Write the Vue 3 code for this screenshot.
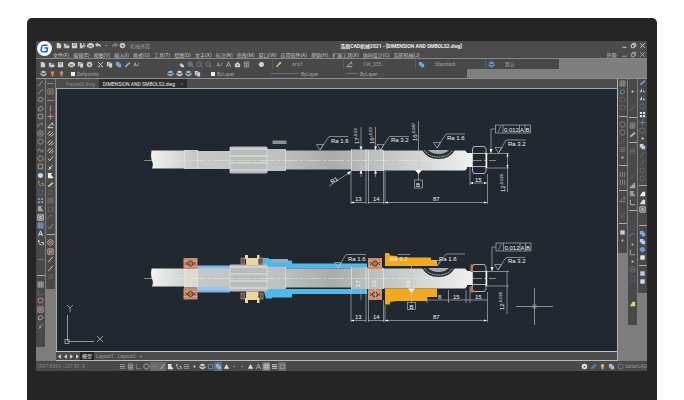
<template>
  <div class="page">
    <div class="monitor">
      <div class="app">
        <header class="header">
          <div class="logo">
            <svg viewBox="0 0 16 16">
              <path d="M12.4 3.4H7.2Q4.4 3.4 3.8 6L3.2 9.6Q2.8 12.6 5.6 12.6H11.4L12.4 7.2H8" fill="none" stroke="#2467ae" stroke-width="2.2" />
            </svg>
          </div>
          <div class="header-rows">
            <div class="title-row">
              <div class="quick">
                <button v-for="(t, i) in quickTools" :key="i" class="tool" :aria-label="t.icon">
                  <Icon :name="t.icon" :color="t.color" />
                </button>
                <span class="workspace">机械界面</span>
              </div>
              <h1>浩辰CAD机械2021 - [DIMENSION AND SMBOLS2.dwg]</h1>
              <div class="window-buttons">
                <button v-for="n in ['min', 'restore', 'close']" :key="n" class="tool" :aria-label="n">
                  <Icon :name="n" color="#ddd" />
                </button>
              </div>
            </div>
            <div class="menu-row">
              <nav class="menu">
                <button v-for="m in menus" :key="m">{{ m }}</button>
              </nav>
              <div class="window-buttons">
                <button class="look">外观-</button>
                <button v-for="n in ['min', 'restore', 'close']" :key="n" class="tool" :aria-label="n">
                  <Icon :name="n" color="#aaa" />
                </button>
              </div>
            </div>
          </div>
        </header>

        <div class="toolbar standard">
          <div class="tool-icons">
            <div v-for="(g, gi) in standardTools" :key="gi" class="tool-group">
              <button v-for="(t, i) in g" :key="i" class="tool" :aria-label="t.icon">
                <Icon :name="t.icon" :color="t.color" />
              </button>
            </div>
          </div>
          <label v-for="s in styleFields" :key="s.value" class="field">
            <Icon :name="s.icon" :color="s.color" />
            <select :aria-label="s.label"><option>{{ s.value }}</option></select>
          </label>
        </div>

        <div class="toolbar props">
          <label class="field layer">
            <Icon name="layers" color="#bbb" />
            <Icon name="bulb" color="#d98a3a" />
            <Icon name="bulb" color="#c9904e" />
            <i class="swatch"></i>
            <select aria-label="Layer"><option>Defpoints</option></select>
          </label>
          <div class="tool-group">
            <button v-for="(t, i) in layerTools" :key="i" class="tool" :aria-label="t.icon">
              <Icon :name="t.icon" :color="t.color" />
            </button>
          </div>
          <label class="field">
            <i class="swatch"></i>
            <select aria-label="Color"><option>ByLayer</option></select>
          </label>
          <label class="field">
            <i class="line long"></i>
            <select aria-label="Linetype"><option>ByLayer</option></select>
          </label>
          <label class="field">
            <i class="line"></i>
            <select aria-label="Lineweight"><option>ByLayer</option></select>
          </label>
        </div>

        <div class="body">
          <div class="side">
            <div v-for="(col, ci) in leftColumns" :key="ci" class="strip" :class="'left-' + ci">
              <div v-for="(t, i) in col" :key="i" class="slot">
                <i v-if="t === 'sep'" class="sep"></i>
                <button v-else-if="t !== 'gap'" class="tool" :aria-label="t[0]">
                  <Icon :name="t[0]" :color="t[1] || '#a2a2a2'" />
                </button>
              </div>
            </div>
          </div>

          <main class="center">
            <div class="doc-tabs">
              <button>Packet3.dwg</button>
              <button class="active">DIMENSION AND SMBOLS2.dwg <span>×</span></button>
            </div>

            <svg class="drawing" viewBox="57 89 560 262">
              <defs>
                <linearGradient id="steel" x1="152" x2="480" y1="0" y2="0" gradientUnits="userSpaceOnUse">
                  <stop offset="0" stop-color="#f1f1f1" />
                  <stop offset="0.13" stop-color="#c6c8c8" />
                  <stop offset="0.38" stop-color="#bfc1c0" />
                  <stop offset="0.55" stop-color="#a9acaa" />
                  <stop offset="0.75" stop-color="#c8caca" />
                  <stop offset="1" stop-color="#f4f4f4" />
                </linearGradient>
                <g id="bearing">
                  <rect width="14" height="11" fill="#c98d6c" />
                  <path d="M0 3H14M0 8H14" stroke="#e5b499" stroke-width="0.6" />
                  <circle cx="7" cy="5.5" r="2.6" fill="#b0745a" stroke="#3b2d2a" stroke-width="0.8" />
                  <path d="M2 4L5 7M12 4L9 7M2 7L4 5M12 7L10 5" stroke="#4b3933" stroke-width="0.8" />
                </g>
                <g id="shaft">
                  <path d="M151.500 150.500H184V150H198V151H230V169H198V169H184V168.500H152Q154 164 151.500 160Q150.500 155 151.500 150.500Z" fill="url(#steel)" />
                  <path d="M267 149H285.500V150.500H351V149.500H383V150.500H465L467 152.500V153H473V167H467V168.500L465 170.500H383V171H351V169.500H285.500V171H267Z" fill="url(#steel)" />
                  <rect x="230" y="146.500" width="37" height="27" rx="1" fill="#b9bcbb" />
                  <path d="M230 149H267M230 156H267M230 163H267M230 170H267" stroke="#d5d7d6" stroke-width="1.6" />
                  <path d="M184.500 150V169M197.500 150V169M285.500 149V171M230 147V173M267 147V173" stroke="#e0e2e2" stroke-width="0.7" />
                  <path d="M351.500 149V171M366 149V171M368.500 150V171M383.500 150V171" stroke="#edf0f0" stroke-width="0.6" />
                  <path d="M422 150H455Q450 159 438.500 159Q427 159 422 150Z" fill="#2c3137" />
                  <path d="M424.500 150.500Q429 157 438.500 157Q448 157 452.500 150.500" fill="none" stroke="#c8caca" stroke-width="1" stroke-dasharray="1.500 0.8" />
                  <path d="M428 150H449Q445 154 438.500 154T428 150Z" fill="#a7acad" />
                  <path d="M473.500 146.500H484.500L486 149V171L484.500 173.500H473.500L472.500 171V149ZM473 153.500H486M473 166.500H486" fill="#20272f" stroke="#d5d8da" stroke-width="0.8" />
                  <path d="M486.500 153V168" stroke="#fff" stroke-width="1.4" />
                  <path d="M144 160.500H496" stroke="#e4e6e8" stroke-width="0.5" stroke-dasharray="16 2 3 2" />
                </g>
                <g id="tri">
                  <path d="M-3.500-5.500H3.500L0 0Z" fill="none" />
                </g>
              </defs>

              <!-- bare shaft -->
              <use href="#shaft" />
              <rect x="272.500" y="140.500" width="14" height="3.500" fill="#8e9294" />

              <g class="ink">
                <path d="M487 153.500H509M487 168H509M507.500 153V192M491 153V129H495.500" />
                <path d="M351 171V204M366 171V204M368.500 171V204M383.500 171V204M385 171V204M487.500 174V204M470 167V185" />
                <path d="M351 202.500H366M368 202.500H384M385 202.500H487M470 183H487" />
                <path d="M361 127V177M375.500 127V177M418.500 121V180M329 186L351 171.500" />
                <rect x="414.500" y="180" width="8" height="8" />
                <path d="M320 150L329 136.500H348M380.500 150L389.500 136.500H409M437 148L446 134H465M498.500 153L506 140H526" />
                <use href="#tri" x="320" y="150" />
                <use href="#tri" x="380.500" y="150" />
                <use href="#tri" x="437" y="148" />
                <use href="#tri" x="498.500" y="153" />
                <rect x="495.500" y="125" width="35" height="8" />
                <path d="M503 125V133M519.500 125V133M525 125V133M498 132L501 126" />
              </g>
              <path class="solid" d="M415 170H422L418.500 174ZM489.500 149H492.500L491 153ZM347 172.500L351 171L349 175ZM359.500 146.500h3L361 150ZM359.500 173.500h3L361 170ZM374 146.500h3L375.500 150ZM374 173.500h3L375.500 170ZM351 202.500l3-1v2ZM487 202.500l-3-1v2ZM385 202.500l3-1v2ZM470 183l3-1v2ZM487 183l-3-1v2ZM507.500 153.500l-1 3h2ZM507.500 168l-1-3h2Z" />
              <g class="dim">
                <text x="331" y="143">Ra 1.6</text>
                <text x="391" y="142">Ra 3.2</text>
                <text x="447" y="140">Ra 1.6</text>
                <text x="508" y="146">Ra 3.2</text>
                <text x="504" y="131.500">0.012</text>
                <text x="520" y="131.500">A</text>
                <text x="525.500" y="131.500">B</text>
                <text x="416" y="186.500">B</text>
                <text x="355" y="201">13</text>
                <text x="373" y="201">14</text>
                <text x="433" y="201">87</text>
                <text x="475" y="182">15</text>
                <text transform="translate(332 184) rotate(-32)">R1</text>
                <text transform="translate(359 144) rotate(-90)">17<tspan class="tol" dy="-2">-0.03</tspan></text>
                <text transform="translate(373.500 144) rotate(-90)">16<tspan class="tol" dy="-2">+0.03</tspan></text>
                <text transform="translate(416.500 141) rotate(-90)">16<tspan class="tol" dy="-2">-0.087</tspan></text>
                <text transform="translate(505 192) rotate(-90)">12<tspan class="tol" dy="-2">-0.020</tspan></text>
              </g>

              <!-- assembled shaft -->
              <rect x="197" y="266" width="33" height="26" fill="#9cc5ee" />
              <path d="M263 258H269V259H288V260.500H292V263.500H367V268.500H263ZM263 289H367V294H292V297.500H272V298.500H266Z" fill="#50b9ec" />
              <use href="#shaft" y="118" />
              <path d="M198 266.500H230M198 291.500H230" stroke="#7cb4ea" stroke-width="2" />
              <rect x="273" y="259" width="14" height="3.500" fill="#9ba9b5" />
              <rect x="184" y="269" width="14" height="20" fill="#f0e6df" opacity="0.55" />
              <use href="#bearing" x="183.500" y="258" />
              <use href="#bearing" x="183.500" y="288.500" />
              <use href="#bearing" x="368" y="258" />
              <use href="#bearing" x="368" y="289" />
              <g fill="#ead7a0">
                <path d="M245 255H248V258H257V255H259.500V259H258.500V265H246V259H245Z" />
                <path d="M246 291.500H258.500V298H259.500V303H257V300H248V303H245V298H246Z" />
              </g>
              <g fill="#6b4e4d" stroke="#c8a294" stroke-width="0.6">
                <rect x="241" y="258" width="3.500" height="6" />
                <rect x="260" y="258" width="3" height="6" />
                <rect x="241" y="293" width="3.500" height="6" />
                <rect x="260" y="293" width="3" height="6" />
              </g>
              <path d="M385 253H389L390 255.500L397 256L398 257.500H431V260H437V266H385Z" fill="#f2a922" />
              <path d="M385 288.500H437V297H427V301H397L390 302V304.500H385Z" fill="#f2a922" />
              <path d="M470.500 264.500H473V272H470.500ZM470.500 286H473V292.500H470.500Z" fill="#b9785a" />

              <g class="ink">
                <path d="M487 271.500H509M487 286H509M507 271V314M492 271V247H496" />
                <path d="M351 289V322M366 289V322M368.500 300V322M383.500 300V322M385 305V322M487.500 292V322M427 297V303M448.500 290V303M466 290V303M470 287V303" />
                <path d="M351 320.500H366M368 320.500H384M385 320.500H487M427 300H487" />
                <path d="M361 272V300M375.500 272V300M411.500 266V303" />
                <rect x="407.500" y="302.500" width="8" height="7" />
                <path d="M338 268L346 254.500H366M398 254.500H410M437 266L446 254H465M498 270L506 257.500H525" />
                <use href="#tri" x="338" y="268" />
                <use href="#tri" x="437" y="266" />
                <use href="#tri" x="498" y="270" />
                <rect x="496" y="243" width="35" height="8" />
                <path d="M503.500 243V251M520 243V251M525.500 243V251M498.500 250L501.500 244" />
              </g>
              <path class="solid" d="M408 288.500H415L411.500 292.500ZM490.500 267H493.500L492 271ZM351 320.500l3-1v2ZM487 320.500l-3-1v2ZM385 320.500l3-1v2Z" />
              <g class="dim">
                <text x="348" y="260.500">Ra 1.6</text>
                <text x="390" y="260.500">Ra 3.2</text>
                <text x="439" y="260.500">Ra 1.6</text>
                <text x="508" y="263">Ra 3.2</text>
                <text x="504.500" y="249.500">0.012</text>
                <text x="520.500" y="249.500">A</text>
                <text x="526" y="249.500">B</text>
                <text x="409.500" y="308.500">B</text>
                <text x="355" y="319">13</text>
                <text x="373" y="319">14</text>
                <text x="433" y="319">87</text>
                <text x="438" y="299">8</text>
                <text x="453" y="299">15</text>
                <text x="475" y="299">15</text>
                <text transform="translate(360 287) rotate(-90)">17</text>
                <text transform="translate(376 287) rotate(-90)">16</text>
                <text transform="translate(410 287) rotate(-90)">16</text>
                <text transform="translate(504 310) rotate(-90)">12<tspan class="tol" dy="-2">-0.020</tspan></text>
              </g>

              <!-- cursor and axes -->
              <path d="M516 306.500H553M534.500 288V325" stroke="#a4a8ab" stroke-width="0.8" />
              <rect x="533" y="305" width="3" height="3" fill="none" stroke="#a4a8ab" stroke-width="0.6" />
              <g fill="none" stroke="#9da2a6" stroke-width="0.9">
                <rect x="65" y="339.500" width="4" height="4" />
                <path d="M67.500 315V341.500H94" />
                <path d="M67 305L70 308L73 305M70 308V312M97 336L103 342M103 336L97 342" />
              </g>
            </svg>

            <div class="layout-tabs">
              <button v-for="(n, i) in ['prev', 'prev', 'next', 'next']" :key="i" class="nav" :aria-label="n">
                <Icon :name="n" color="#e0e0e0" />
              </button>
              <button class="active">模型</button>
              <button>Layout1</button>
              <button>Layout2</button>
              <button>+</button>
            </div>
          </main>

          <div class="side">
            <div v-for="(col, ci) in rightColumns" :key="ci" class="strip" :class="'right-' + ci">
              <div v-for="(t, i) in col" :key="i" class="slot">
                <i v-if="t === 'sep'" class="sep"></i>
                <button v-else-if="t !== 'gap'" class="tool" :aria-label="t[0]">
                  <Icon :name="t[0]" :color="t[1] || '#8c8c8c'" />
                </button>
              </div>
            </div>
          </div>
        </div>

        <footer class="status">
          <span class="coords">1997.8361, -227.81, 0</span>
          <div class="status-icons">
            <button v-for="(t, i) in statusTools" :key="i" class="tool" :class="{ on: t[2] }" :aria-label="t[0]">
              <Icon :name="t[0]" :color="t[1]" />
            </button>
          </div>
          <div class="status-right">
            <button v-for="(t, i) in trayTools" :key="i" class="tool" :aria-label="t[0]">
              <Icon :name="t[0]" :color="t[1]" />
            </button>
            <span>GstarCAD</span>
          </div>
        </footer>
      </div>
    </div>
  </div>
</template>

<script setup>
import { h } from 'vue'

// [path, filled]
const glyphs = {
  file: ['M2 1H5L7 3V7H2Z', true],
  open: ['M1 2H3L4 3H7V4H3L2 6H1ZM3 4.500H8L6.500 7H1.500Z', true],
  save: ['M1 1H3V4H5V1H7V7H1ZM3.500 1H4.500V3H3.500Z', true],
  saveas: ['M1 1H3V4H5V1H6V4L4 6V7H1ZM7 3L8 4L5 7V6Z', true],
  print: ['M2 1H6V2H7L8 3V6H6V7H2V6H0V3L2 2ZM2 4V5H6V4Z', true],
  undo: ['M0 3L3 0.500V2Q7 2 7 6Q5 4 3 4V6Z', true],
  redo: ['M8 3L5 0.500V2Q1 2 1 6Q3 4 5 4V6Z', true],
  dash: ['M2.500 4H5', false],
  gear: ['M4 0.500L5 1.300L6.500 1.300L6.700 3L7.600 4L6.700 5L6.500 6.700L5 6.700L4 7.500L3 6.700L1.500 6.700L1.300 5L0.400 4L1.300 3L1.500 1.300L3 1.300ZM3 3V5H5V3Z', true],
  cut: ['M1 1L6 6M7 1L2 6M1 6.500H3M5 6.500H7', false],
  copy: ['M1 1H5V2H3V6H1ZM3.500 2.500H7V7.500H3.500Z', true],
  brush: ['M5 1H7V3L4 5L3 7L1 6L3 4Z', true],
  ab: ['M1 6L2.500 2L4 6M5 6L7 2M1.500 5H3.500', false],
  hand: ['M1 4L3 4V2L7 5V7H4Z', true],
  zoom: ['M1 3.500A2.500 2.500 0 1 0 6 3.500A2.500 2.500 0 1 0 1 3.500M5.300 5.300L7.500 7.500', false],
  zoomin: ['M1 3.500A2.500 2.500 0 1 0 6 3.500A2.500 2.500 0 1 0 1 3.500M5.300 5.300L7.500 7.500M2.500 3.500H4.500M3.500 2.500V4.500', false],
  home: ['M0.500 4L4 1L7.500 4H7V7H1V4ZM3 4V5H5V4Z', true],
  calc: ['M1.500 1H6.500V7H1.500ZM1.500 3H6.500M1.500 5H6.500M4 3V7', false],
  point: ['M3 3H5V5H3Z', true],
  ball: ['M4 1A3 3 0 1 1 3.900 1Z', true],
  pen: ['M1 7L1.500 5L6 1L7.500 2.500L3 6.500Z', true],
  layers: ['M4 0.500L7.500 2.300L4 4L0.500 2.300ZM0.500 3.500L4 5.300L7.500 3.500V5.500L4 7.500L0.500 5.500Z', true],
  bulb: ['M4 1Q6 1 6 3L5 5V7H3V5L2 3Q2 1 4 1', true],
  slash: ['M1.500 7L6.500 1', false],
  slashes: ['M0.500 5L4 1M2 7L7 2M4.500 7.500L7.500 4.500', false],
  poly: ['M1.500 6.500L2 3L5 1.500L7 4L5 6.500Z', false],
  circle: ['M4 1A3 3 0 1 1 3.900 1Z', false],
  target: ['M4 0.800A3.200 3.200 0 1 1 3.900 0.800ZM4 3A1 1 0 1 1 3.900 3Z', false],
  arc: ['M1 6Q1 1.500 6.500 2', false],
  cloud: ['M2 6Q0 5 2 3Q3 0 5.500 2Q8 4 6 6Z', false],
  wave: ['M1 5Q2.500 0 4 4T7 3', false],
  box: ['M1.500 1.500H6.500V6.500H1.500Z', false],
  boxdot: ['M1 1H7V7H1ZM3 3H5V5H3Z', false],
  block: ['M1.500 1.500H6.500V6.500H1.500Z', true],
  blocks: ['M1 1H3.500V3.500H1ZM4.500 1H7V3.500H4.500ZM1 4.500H3.500V7H1ZM4.500 4.500H7V7H4.500Z', true],
  grid: ['M1 1H7V7H1ZM3 1V7M5 1V7M1 3H7M1 5H7', false],
  hatch: ['M1 4L4 1M1 7L7 1M4 7L7 4', false],
  bars: ['M1 2H7M1 4H7M1 6H7', false],
  vbars: ['M1.500 1V7M4 1V7M6.500 1V7', false],
  hline: ['M0.500 4H7.500', false],
  vline: ['M4 0.500V7.500', false],
  plus: ['M4 0.500V7.500M0.500 4H7.500', false],
  angle: ['M7 6.500H1L6 1L7 4', false],
  corner: ['M1 6.500H7M1.500 6V1', false],
  check: ['M1 4L3 6.500L7 1.500', false],
  cross: ['M1.500 7L6.500 1M2 3L5 6', false],
  flag: ['M1 1H6L4.500 3L7 6V7H1Z', true],
  step: ['M1 7V5H3V3H5V1H7V7Z', true],
  wedge: ['M1 7L4 2H7V7Z', true],
  text: ['M1.500 7L4 1L6.500 7M2.500 5H5.500', false],
  swap: ['M2 1V4M1 2.500H3M5 4H7V7M2 5L5 7', false],
  pair: ['M1 1H5V3H7V7H3V5H1Z', true],
  mirror: ['M3.500 1V6H0.500ZM4.500 3L7.500 6H4.500Z', true],
  tri: ['M4 1L7 6.500H1Z', true],
  min: ['M1.500 6H6.500', false],
  restore: ['M1.500 3H5V6.500H1.500ZM3 3V1.500H6.500V5H5', false],
  close: ['M1.500 1.500L6.500 6.500M6.500 1.500L1.500 6.500', false],
  prev: ['M5.500 1.500V6.500L2.500 4Z', true],
  next: ['M2.500 1.500V6.500L5.500 4Z', true]
}

const Icon = (props) => {
  const [d, filled] = glyphs[props.name]
  return h('svg', { class: 'icon', viewBox: '0 0 8 8' }, [
    h('path', {
      d,
      fill: filled ? props.color : 'none',
      stroke: filled ? 'none' : props.color,
      'fill-rule': 'evenodd'
    })
  ])
}
Icon.props = ['name', 'color']

const tools = (names, color = '#d0d0d0') =>
  names.split(' ').map((n) => {
    const [icon, c] = n.split(':')
    return { icon, color: c || color }
  })

const menus = [
  '文件(F)', '编辑(E)', '视图(V)', '插入(I)', '格式(O)', '工具(T)', '绘图(D)', '文字(X)',
  '标注(N)', '修改(M)', '窗口(W)', '应用软件(A)', '帮助(H)', '扩展工具(X)', '协同设计(C)', '浩辰机械(J)'
]

const quickTools = tools('file open save saveas print undo dash:#999 redo:#888 gear')

const standardTools = [
  tools('file open save'),
  tools('print copy gear'),
  tools('cut copy pair:#7da7d8 pen:#8ba6c4 ab:#aaa'),
  tools('hand zoomin:#7894c4 zoom:#7884a0 zoom:#7884a0'),
  tools('ab:#999 text:#aaa home calc:#999'),
  tools('ball')
]

const layerTools = tools('layers:#8eb9d6 layers layers:#9ab8d8 copy')

const styleFields = [
  { label: 'Text style', icon: 'brush', color: '#d6bc86', value: 'aris1' },
  { label: 'Dimension style', icon: 'angle', color: '#bbb', value: 'CW_335' },
  { label: 'Table style', icon: 'pair', color: '#6aa5e0', value: 'Standard' },
  { label: 'Multileader style', icon: 'layers', color: '#7398d8', value: '默认' }
]

const strip = (names) =>
  names.split(' ').map((n) => (n === 'gap' || n === 'sep' ? n : n.split(':')))

const leftColumns = [
  strip('slash slash cloud poly box arc target circle wave circle box ball:#b9d9ee swap box:#4d638b blocks:#7890ab flag boxdot:#eee grid:#8095d0 text:#eee swap:#eee gap hline:#777 gap sep grid corner:#666 box:#b08a90 boxdot:#d0a0ae poly:#aaa cross gap gap'),
  strip('hline:#b4867c boxdot:#9b8072 hline:#c59078 vline:#c59078 plus:#d09180 angle:#eee slashes:#ddd slashes:#ddd slashes:#ddd check:#ddd cross:#eee flag:#eee pen:#bbb hatch:#6e6e62 grid:#6e6e62 box:#66665c arc:#777 check:#999 sep target:#e5aaa2 boxdot:#e5aaa2 slash:#ddd slash:#ddd hatch:#776a60 gap')
]

const rightColumns = [
  strip('grid poly:#888 box:#626262 box:#626262 sep circle circle slash:#666 bars:#777 point:#ccc sep vbars vbars sep angle gap hatch:#666 sep block:#ccc point:#ccc gap'),
  strip('gap point:#ddd gap slash:#a5604a sep calc pen:#bbb sep bars:#707070 gap gap cross:#9e4a42 step:#aaa flag:#999 corner:#bbb sep gap box:#50586a arc:#7088bc point:#ccc corner:#aaa point:#ccc target:#747484 box:#50587a gap gap wedge:#e0d07e gap gap'),
  strip('pen:#7397dc mirror:#93b7e5 mirror:#9ac0e0 circle:#5a7a95 blocks:#d7e6f2 plus:#5d85d0 circle:#777 point:#eee pair:#bcd1e8 slash:#777 slash:#777 box:#666 box:#666 sep wedge:#eee wedge:#ddd boxdot:#ddd gap sep pair:#7baee2 pair:#b6d2ee ball:#6d99e6 block:#dde8f4 sep block:#b5d0ec block:#cfdeef gap')
]

const statusTools = [
  ['bars', '#a0a0a0'], ['calc', '#a0a0a0'], ['corner', '#8a8a8a'], ['circle', '#bbb'],
  ['hline', '#888', true], ['slash', '#bbb', true], ['flag', '#ddd'], ['swap', '#ccc'],
  ['bars', '#999'], ['point', '#ddd'], ['layers', '#ccc'], ['box', '#6f93bd'],
  ['pair', '#7ab2ee', true], ['tri', '#ddd'], ['dash', '#999'], ['dash', '#999'],
  ['tri', '#ddd'], ['text', '#aaa'], ['grid', '#bbb', true], ['bars', '#ddd'], ['box', '#999', true]
]

const trayTools = [
  ['gear', '#eee'], ['pen', '#5f86c8'], ['bulb', '#e8b060'], ['pair', '#9cc0e8'], ['box', '#777']
]
</script>

<style>
body {
  margin: 0;
  background: #fff;
}
</style>

<style scoped>
.page {
  padding: 18px 27px 0;
  font-family: Roboto, "Noto Sans CJK SC", sans-serif;
  font-size: 5px;
  line-height: 8px;
  color: #c4c4c4;
}

.monitor {
  padding: 23px 10px 30px 9px;
  background: #252525;
  border-radius: 5px 5px 0 0;
}

.app {
  background: #4b4b4b;
}

button,
select {
  margin: 0;
  padding: 0;
  border: 0;
  background: none;
  color: inherit;
  font: inherit;
  white-space: nowrap;
}

select {
  appearance: none;
  color: #a0a0a0;
}

.tool {
  display: flex;
  flex: none;
  align-items: center;
  justify-content: center;
  width: 9px;
  height: 9px;
}

.icon {
  display: block;
  flex: none;
  width: 7px;
  height: 7px;
}

.header {
  display: flex;
  height: 17px;
}

.logo {
  flex: none;
  width: 15px;
  height: 15px;
  margin-left: 1px;
  border-radius: 50%;
  background: #f5f8fb;
}

.logo svg {
  display: block;
  width: 11px;
  margin: 2px;
}

.header-rows {
  flex: 1;
}

.title-row,
.menu-row {
  display: flex;
  align-items: center;
  justify-content: space-between;
  height: 9px;
}

.quick,
.menu,
.window-buttons {
  display: flex;
  align-items: center;
}

.quick {
  padding-left: 2px;
}

.quick .tool {
  width: 8px;
}

.workspace {
  padding-left: 4px;
  color: #999;
}

h1 {
  margin: 0 0 0 32px;
  font-size: 5px;
  line-height: 8px;
  font-weight: bold;
  color: #eee;
}

.menu {
  gap: 4px;
  padding-left: 1px;
}

.look {
  padding-right: 2px;
}

.toolbar {
  display: grid;
  align-items: stretch;
  background: #7f7f7f;
}

.standard {
  grid-template-columns: 236fr 71fr 72fr 70fr 74fr 88fr;
  height: 11px;
  border-top: 1px solid #858585;
  box-sizing: border-box;
}

.props {
  grid-template-columns: 130fr 41fr 60fr 75fr 125fr 180fr;
  height: 9px;
}

.props > *,
.tool-icons,
.field {
  background: #484848;
}

.tool-icons {
  display: flex;
  align-items: center;
  gap: 2px;
  padding-left: 2px;
}

.tool-group {
  display: flex;
  align-items: center;
}

.tool-group:nth-child(4) {
  margin-left: 34px;
}

.tool-icons .tool-group:last-child {
  margin-left: 4px;
}

.field {
  display: flex;
  align-items: center;
  gap: 2px;
  padding-left: 4px;
}

.standard .field {
  gap: 10px;
  padding-left: 2px;
  border-left: 1px solid #5a5a5a;
}

.swatch {
  width: 4px;
  height: 4px;
  background: #f0f0f0;
}

.layer .swatch {
  margin-left: 4px;
}

.line {
  width: 12px;
  height: 1px;
  background: #6d6d6d;
}

.line.long {
  width: 28px;
}

.body {
  display: flex;
  background: #7d7d7d;
  border-top: 1px solid #8d9096;
}

.side {
  display: flex;
  align-items: flex-start;
  gap: 1px;
}

.strip {
  display: flex;
  flex-direction: column;
  width: 9px;
  background: #494949;
}

.left-0 {
  height: 268px;
}

.left-1 {
  height: 210px;
}

.right-0 {
  height: 174px;
}

.right-1 {
  height: 246px;
}

.right-2 {
  height: 214px;
}

.slot {
  display: flex;
  flex: 1;
  min-height: 0;
  align-items: center;
  justify-content: center;
}

.slot .icon {
  width: 7px;
  height: 7px;
}

.sep {
  width: 8px;
  height: 1px;
  background: #aaa;
}

.center {
  flex: 1;
  min-width: 0;
  margin-left: 1px;
  border-right: 1px solid #b0b4b8;
  background: #4b4b4b;
}

.doc-tabs {
  display: flex;
  height: 9px;
  padding-left: 6px;
  border-bottom: 1px solid #a4a9b2;
}

.doc-tabs button {
  padding: 0 4px;
  color: #888;
}

.doc-tabs .active {
  background: #2b2b2b;
  color: #eee;
}

.doc-tabs span {
  padding-left: 4px;
  color: #777;
}

.drawing {
  display: block;
  width: 100%;
  box-sizing: border-box;
  border-left: 1px solid #a4a9b2;
  background: #212830;
}

.ink {
  fill: none;
  stroke: #c3c7ca;
  stroke-width: 0.6;
}

.solid {
  fill: #fff;
}

.dim {
  fill: #f2f4f5;
  font-family: "Liberation Sans", sans-serif;
  font-size: 6px;
}

.tol {
  font-size: 4px;
}

.layout-tabs {
  display: flex;
  height: 8px;
  border-top: 1px solid #c2c4c4;
  border-bottom: 1px solid #b9bcae;
}

.layout-tabs button {
  padding: 0 2px;
  color: #999;
}

.layout-tabs .nav {
  display: flex;
  align-items: center;
  width: 6px;
  padding: 0;
}

.layout-tabs .active {
  background: #222;
  color: #eee;
}

.status {
  display: flex;
  align-items: center;
  height: 10px;
  background: #4a4a4a;
}

.coords {
  width: 81px;
  padding-left: 1px;
  color: #888;
}

.status-icons,
.status-right {
  display: flex;
  align-items: center;
}

.status-icons .tool {
  width: 8px;
}

.status-icons .on {
  background: #6a6a6a;
}

.status-right {
  margin-left: auto;
  color: #999;
}
</style>
